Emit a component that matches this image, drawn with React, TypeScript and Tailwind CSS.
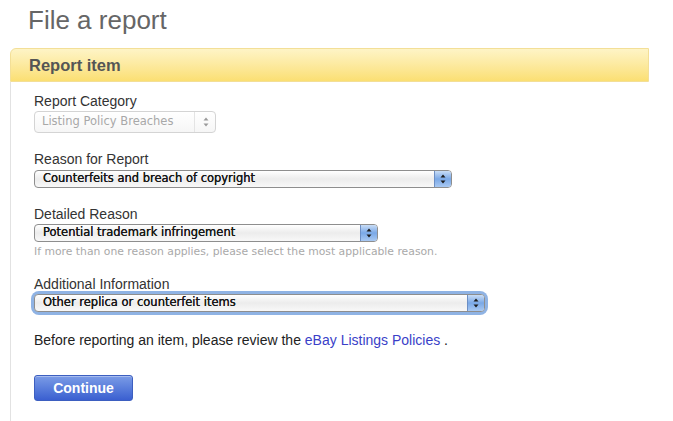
import React from "react";

type Variant = "disabled" | "normal" | "focused";

function Arrows({ color }: { color: string }) {
  return (
    <svg width="6" height="10" viewBox="0 0 6 10">
      <path d="M3 0.5 L5.5 3.5 L0.5 3.5 Z" fill={color} />
      <path d="M3 9.5 L5.5 6.5 L0.5 6.5 Z" fill={color} />
    </svg>
  );
}

function FakeSelect({ text, width, variant }: { text: string; width: number; variant: Variant }) {
  if (variant === "disabled") {
    return (
      <div
        className="flex h-[22px] items-center justify-between rounded-[4px] border border-[#d4d4d4] bg-gradient-to-b from-white to-[#f6f6f6] pl-[7px] pr-[6px] text-[11.5px] text-[#a8a8a8] font-['DejaVu_Sans',sans-serif] shadow-[inset_0_1px_0_#fff]"
        style={{ width }}
      >
        <span>{text}</span>
        <div className="flex h-full items-center border-l border-[#e4e4e4] pl-[8px]">
          <Arrows color="#9a9a9a" />
        </div>
      </div>
    );
  }
  return (
    <div
      className={
        variant === "focused"
          ? "rounded-[5px] shadow-[0_0_0_3px_#8fb3e4] mt-[1px]"
          : "rounded-[5px]"
      }
      style={{ width }}
    >
      <div className="flex h-[18px] items-stretch overflow-hidden rounded-[4px] border border-[#8e8e8e] bg-gradient-to-b from-white via-[#ececec] to-[#f8f8f8]">
        <div className="flex flex-1 items-center pl-[8px] text-[11.5px] text-[#1a1a1a] font-['DejaVu_Sans',sans-serif] [text-shadow:0_0_0.2px_#000]">
          {text}
        </div>
        <div className="flex w-[17px] items-center justify-center border-l border-[#6d8fc4] bg-gradient-to-b from-[#c9ddf6] via-[#7aa8e6] to-[#a9c9f2]">
          <Arrows color="#1c1c1c" />
        </div>
      </div>
    </div>
  );
}

export default function App() {
  return (
    <div className="h-[421px] w-[673px] overflow-hidden bg-white font-['Liberation_Sans',Arial,sans-serif]">
      <h1 className="pl-[28px] pt-[5px] text-[26px] leading-[30px] text-[#666]">File a report</h1>

      <div className="ml-[10px] mt-[13px] w-[639px]">
        <div className="flex h-[34px] items-center rounded-tl-[6px] border border-[#f3df97] bg-gradient-to-b from-[#fef4c6] to-[#fbdf72] pl-[18px]">
          <span className="text-[16.5px] font-bold text-[#555]">Report item</span>
        </div>

        <div className="border-l border-[#e2e2e2] pb-[40px] pl-[23px] text-[14px] text-[#333]">
          <div className="pt-[12px] leading-[15px]">Report Category</div>
          <div className="mt-[2px]">
            <FakeSelect text="Listing Policy Breaches" width={182} variant="disabled" />
          </div>

          <div className="mt-[19px] leading-[15px]">Reason for Report</div>
          <div className="mt-[3px]">
            <FakeSelect text="Counterfeits and breach of copyright" width={418} variant="normal" />
          </div>

          <div className="mt-[19px] leading-[15px]">Detailed Reason</div>
          <div className="mt-[2px]">
            <FakeSelect text="Potential trademark infringement" width={344} variant="normal" />
          </div>
          <div className="mt-[3px] text-[10.8px] leading-[13px] text-[#a9a9a9] font-['DejaVu_Sans',sans-serif]">
            If more than one reason applies, please select the most applicable reason.
          </div>

          <div className="mt-[19px] leading-[15px]">Additional Information</div>
          <div className="mt-[2px]">
            <FakeSelect text="Other replica or counterfeit items" width={451} variant="focused" />
          </div>

          <p className="mt-[21px] leading-[15px] text-[#222]">
            Before reporting an item, please review the{" "}
            <a className="text-[#3a3fc8]">eBay Listings Policies</a> .
          </p>

          <button className="mt-[27px] h-[26px] w-[99px] rounded-[3px] border border-[#3d5fc0] bg-gradient-to-b from-[#7b9be6] to-[#3b5fd0] text-[14px] font-bold text-white shadow-[inset_0_1px_0_rgba(255,255,255,0.35)]">
            Continue
          </button>
        </div>
      </div>
    </div>
  );
}
